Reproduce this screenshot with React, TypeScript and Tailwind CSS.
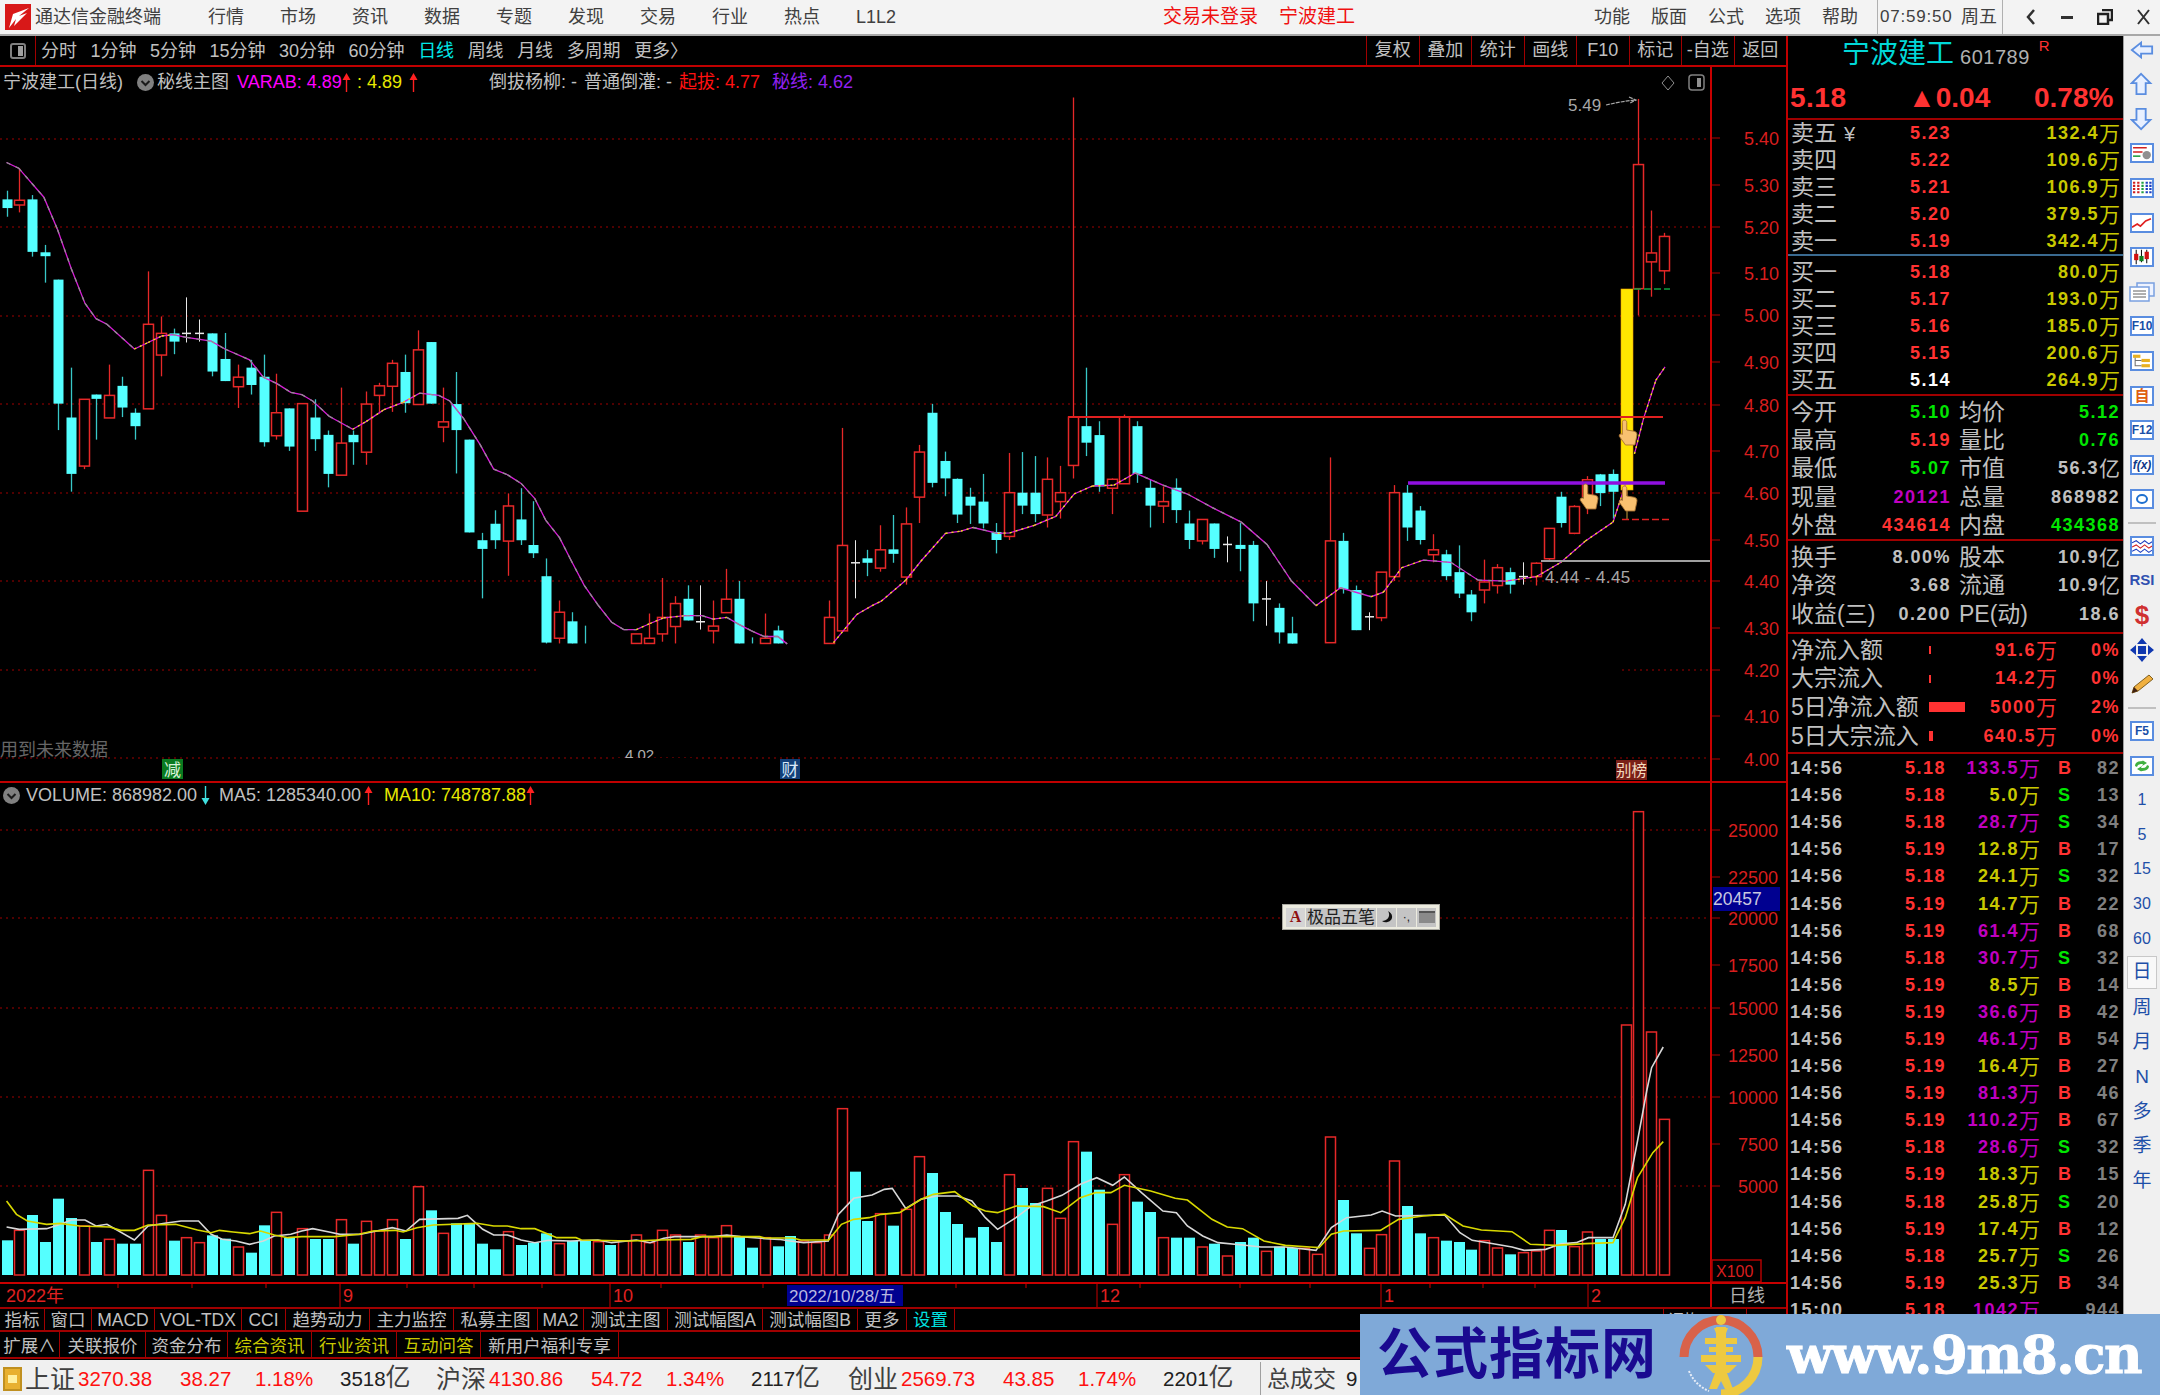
import type { ReactNode } from "react";

type Candle = ["c" | "r" | "w", number, number, number, number] | null;

// Candles read off the chart, index = trading day, values = high, body top, body bottom, low
const candlesLeft: Candle[] = [
  ["c", 140, 160, 180, 200], ["r", 88, 162, 173, 190], ["c", 150, 160, 281, 292], ["c", 265, 282, 291, 352],
  ["c", 345, 345, 631, 692], ["c", 548, 663, 793, 834], ["r", 621, 621, 775, 782], ["c", 610, 610, 620, 714],
  ["r", 541, 612, 664, 664], ["c", 569, 590, 640, 662], ["c", 642, 652, 683, 714], ["r", 326, 448, 643, 643],
  ["r", 430, 469, 519, 568], ["c", 458, 469, 488, 517], ["w", 386, 469, 471, 490], ["w", 437, 469, 471, 488],
  ["c", 469, 469, 557, 568], ["c", 468, 528, 579, 579], ["r", 541, 570, 592, 641], ["c", 530, 548, 588, 610],
  ["c", 518, 569, 720, 730], ["r", 562, 652, 705, 714], ["c", 642, 642, 730, 740], ["r", 631, 631, 879, 879],
  ["c", 621, 663, 713, 740], ["c", 693, 703, 793, 824], ["r", 594, 722, 796, 796], ["c", 693, 703, 720, 772],
  ["r", 603, 632, 743, 772], ["r", 583, 590, 612, 654], ["r", 530, 538, 591, 650], ["c", 518, 558, 630, 652],
  ["r", 462, 507, 633, 633], ["c", 489, 489, 631, 631], ["r", 594, 673, 685, 720], ["c", 558, 632, 692, 792],
  ["c", 714, 714, 928, 928], ["c", 929, 946, 966, 1080], ["c", 877, 908, 946, 966], ["r", 838, 867, 948, 1028],
  ["c", 826, 898, 946, 957], ["c", 856, 957, 976, 987], ["c", 988, 1029, 1182, 1184], ["r", 1085, 1112, 1172, 1184],
  ["c", 1112, 1133, 1184, 1184], ["c", 1143, 1184, 1184, 1184], null, null, null,
  ["r", 1162, 1162, 1184, 1184], ["r", 1115, 1172, 1184, 1184], ["r", 1033, 1124, 1162, 1180], ["r", 1075, 1092, 1145, 1184],
  ["c", 1050, 1081, 1131, 1131], ["w", 1050, 1134, 1136, 1152], ["r", 1085, 1144, 1155, 1184], ["r", 1012, 1082, 1113, 1113],
  ["c", 1040, 1081, 1184, 1184], ["c", 1170, 1184, 1184, 1184], ["r", 1115, 1172, 1184, 1184], ["c", 1143, 1154, 1184, 1184],
  null, null, null, ["r", 1085, 1124, 1184, 1184], ["r", 687, 958, 1155, 1155], ["w", 946, 998, 1000, 1080],
];

const candlesRight: Candle[] = [
  ["c", 1030, 1049, 1059, 1089], ["r", 975, 1030, 1071, 1079], ["c", 952, 1029, 1039, 1059], ["r", 935, 972, 1091, 1108],
  ["r", 795, 811, 912, 970], ["c", 703, 723, 880, 890], ["c", 810, 831, 870, 910], ["c", 870, 871, 951, 970],
  ["c", 891, 911, 931, 972], ["c", 860, 922, 971, 982], ["c", 970, 990, 1008, 1038], ["r", 813, 902, 1000, 1008],
  ["c", 811, 902, 931, 950], ["c", 820, 902, 950, 968], ["r", 823, 872, 952, 980], ["r", 842, 902, 922, 960],
  ["r", 17, 733, 841, 870], ["c", 622, 753, 790, 820], ["c", 742, 773, 888, 900], ["r", 870, 872, 892, 950],
  ["r", 727, 733, 882, 882], ["c", 742, 753, 860, 880], ["c", 872, 891, 931, 980], ["r", 888, 922, 932, 970],
  ["c", 870, 891, 941, 970], ["c", 942, 971, 1008, 1028], ["r", 962, 962, 1010, 1018], ["c", 971, 971, 1028, 1048],
  ["w", 1000, 1018, 1020, 1058], ["c", 970, 1019, 1028, 1078], ["c", 1010, 1019, 1150, 1190], ["w", 1100, 1140, 1142, 1200],
  ["c", 1150, 1160, 1215, 1240], ["c", 1180, 1217, 1240, 1240], null, null,
  ["r", 823, 1010, 1238, 1238], ["c", 992, 1010, 1118, 1128], ["c", 1110, 1120, 1210, 1210], ["w", 1170, 1180, 1182, 1210],
  ["r", 1080, 1080, 1182, 1190], ["r", 885, 902, 1090, 1100], ["c", 885, 902, 980, 1010], ["c", 932, 942, 1008, 1018],
  ["r", 995, 1030, 1041, 1058], ["c", 1030, 1040, 1089, 1098], ["c", 1020, 1080, 1128, 1138], ["c", 1120, 1130, 1170, 1190],
  ["r", 1052, 1102, 1120, 1150], ["r", 1062, 1070, 1110, 1128], ["c", 1070, 1080, 1108, 1128], ["w", 1058, 1090, 1092, 1108],
  ["r", 1058, 1060, 1090, 1110], ["r", 982, 982, 1050, 1055], ["c", 900, 911, 970, 980], ["r", 930, 933, 993, 995],
  ["r", 865, 873, 910, 950], ["c", 860, 861, 903, 932], ["c", 850, 860, 900, 960], null,
  ["r", 20, 167, 445, 505], ["r", 270, 365, 385, 463], ["r", 320, 328, 405, 435],
];

const y7 = (p: number) => 130 + p / 2.306;
const y8 = (p: number) => 90 + p / 2.24;
const barX = (i: number) => Math.round(6.5 + 12.85 * i);

const allCandles = [
  ...candlesLeft.map((c, i) => ({ c, i, y: y7 })),
  ...candlesRight.map((c, i) => ({ c, i: i + 67, y: y8 })),
];

const maA: number[][] = [[12, 75], [34, 88], [80, 155], [105, 230], [130, 320], [155, 400], [175, 435], [195, 448], [245, 505], [270, 490], [295, 475], [315, 472], [340, 478], [385, 487], [410, 505], [455, 530], [480, 570], [505, 585], [530, 605], [550, 610], [570, 625], [600, 660], [643, 690], [668, 672], [700, 645], [735, 628], [765, 607], [800, 612], [820, 625], [845, 665], [875, 725], [900, 782], [925, 795], [950, 815], [975, 850], [995, 900], [1020, 940], [1040, 990], [1065, 1050], [1090, 1095], [1115, 1135], [1137, 1152], [1160, 1152], [1185, 1138], [1210, 1125], [1250, 1120], [1280, 1120], [1300, 1128], [1325, 1124], [1347, 1140], [1370, 1155], [1393, 1168], [1418, 1168], [1435, 1185]];
const maB: number[][] = [[22, 1238], [60, 1175], [85, 1155], [100, 1145], [140, 1098], [165, 1055], [205, 993], [230, 988], [250, 980], [290, 993], [310, 992], [350, 975], [385, 955], [415, 905], [445, 887], [480, 885], [515, 858], [560, 885], [600, 905], [640, 935], [688, 968], [730, 1018], [770, 1100], [810, 1155], [850, 1115], [900, 1135], [920, 1125], [950, 1070], [985, 1053], [1030, 1058], [1075, 1098], [1120, 1100], [1170, 1090], [1210, 1058], [1250, 1010], [1295, 968], [1315, 885]];
const maC: number[][] = [[1330, 815], [1345, 735], [1365, 650], [1380, 620]];

const x7 = (p: number) => p / 1.823;
const x8 = (p: number) => 820 + p / 1.633;
const maLines = [
  maA.map(([a, b]) => [x7(a), y7(b)]),
  maB.map(([a, b]) => [x8(a), y8(b)]),
  maC.map(([a, b]) => [x8(a), y8(b)]),
];

const priceTicks = [
  ["5.40", 138], ["5.30", 185], ["5.20", 227], ["5.10", 273], ["5.00", 315], ["4.90", 362], ["4.80", 405], ["4.70", 451],
  ["4.60", 493], ["4.50", 540], ["4.40", 581], ["4.30", 628], ["4.20", 670], ["4.10", 716], ["4.00", 759],
] as const;

// volume bars: c = cyan solid, r = red outline, value = bar top
const volA: ["c" | "r", number][] = [
  ["c", 448], ["r", 418], ["c", 372], ["c", 453], ["c", 323], ["c", 381], ["r", 405], ["c", 453], ["r", 445], ["c", 458], ["c", 458],
  ["r", 238], ["r", 373], ["c", 449], ["r", 440], ["r", 455], ["c", 433], ["c", 443], ["r", 468], ["c", 485], ["c", 403], ["r", 364],
  ["c", 440], ["r", 413], ["c", 444], ["c", 444], ["r", 386], ["c", 458], ["r", 391], ["r", 420], ["r", 386], ["c", 444], ["r", 287],
  ["c", 358], ["r", 427], ["c", 397], ["c", 397], ["c", 458], ["c", 475], ["r", 422], ["c", 462], ["c", 455], ["c", 427], ["r", 458],
  ["c", 450], ["c", 450], ["r", 452], ["c", 462], ["r", 450], ["r", 432], ["r", 455], ["r", 418], ["r", 432], ["c", 453], ["r", 432],
  ["r", 440], ["r", 404], ["c", 437], ["c", 470], ["r", 440], ["c", 466], ["c", 435], ["r", 450], ["r", 455], ["r", 432], ["r", 53],
  ["c", 242], ["c", 390], ["r", 368], ["c", 404], ["r", 355], ["r", 197], ["c", 246], ["c", 363], ["c", 399], ["c", 440], ["c", 408],
  ["c", 453], ["r", 251], ["c", 291], ["c", 336], ["r", 292], ["r", 382], ["r", 152], ["c", 182], ["c", 296], ["r", 400], ["r", 251],
  ["c", 332], ["c", 363], ["r", 440], ["c", 440], ["c", 440], ["r", 468], ["c", 458], ["r", 495], ["c", 453], ["c", 440], ["r", 481],
  ["c", 467], ["c", 471], ["r", 472], ["r", 490], ["r", 138], ["c", 327], ["c", 427], ["r", 472], ["r", 431], ["r", 210], ["c", 345],
  ["c", 427], ["r", 440], ["c", 449], ["c", 453], ["c", 476], ["r", 449], ["r", 471], ["c", 490], ["r", 485], ["r", 480], ["r", 418],
  ["c", 417], ["r", 467], ["r", 423], ["c", 444], ["c", 444], ["r", -198], ["r", -838], ["r", -177], ["r", 85],
];

const ma5A = [[12, 408], [35, 415], [85, 413], [110, 400], [130, 387], [155, 387], [175, 405], [195, 400], [245, 447], [270, 405], [300, 397], [330, 390], [362, 390], [385, 430], [405, 445], [430, 450], [455, 460], [480, 450], [500, 435], [530, 430], [550, 420], [570, 413], [600, 423], [620, 430], [655, 430], [680, 422], [715, 410], [740, 420], [765, 385], [835, 382], [852, 373], [880, 415], [900, 432], [925, 432], [950, 447], [975, 455], [1000, 448], [1040, 450], [1090, 447], [1115, 455], [1160, 447], [1185, 455], [1210, 442], [1230, 437], [1265, 437], [1300, 437], [1325, 432], [1350, 437], [1395, 443], [1420, 445], [1440, 450], [1465, 455], [1510, 450]];
const ma5B = [[15, 435], [30, 370], [55, 322], [85, 312], [105, 295], [118, 292], [140, 352], [165, 325], [190, 315], [225, 315], [248, 330], [270, 380], [290, 415], [320, 380], [345, 345], [370, 330], [395, 313], [425, 280], [452, 260], [478, 283], [497, 258], [525, 305], [560, 360], [582, 365], [600, 405], [625, 435], [650, 455], [690, 462], [720, 468], [760, 468], [810, 478], [835, 410], [860, 380], [900, 372], [918, 360], [940, 375], [1020, 372], [1045, 425], [1065, 448], [1090, 455], [1130, 468], [1150, 478], [1185, 475], [1210, 458], [1235, 455], [1255, 440], [1295, 440], [1315, 340], [1335, 150], [1350, 0], [1358, -70], [1377, -132]];
const ma10A = [[12, 330], [30, 370], [50, 390], [85, 400], [110, 397], [145, 405], [200, 408], [220, 418], [245, 418], [270, 402], [320, 400], [360, 417], [385, 425], [400, 418], [425, 423], [455, 428], [475, 420], [500, 432], [525, 440], [550, 437], [610, 437], [655, 430], [680, 420], [720, 418], [735, 423], [760, 410], [790, 402], [870, 397], [900, 405], [925, 405], [950, 413], [975, 413], [1015, 440], [1050, 440], [1060, 447], [1150, 450], [1200, 447], [1260, 445], [1280, 437], [1385, 437], [1395, 441], [1445, 441], [1460, 447], [1510, 447]];
const ma10B = [[15, 445], [35, 400], [55, 385], [80, 380], [100, 370], [130, 365], [165, 325], [185, 310], [220, 302], [250, 345], [270, 360], [290, 365], [320, 345], [365, 347], [393, 365], [425, 320], [450, 305], [475, 305], [497, 283], [540, 300], [580, 322], [600, 327], [640, 385], [665, 408], [690, 413], [725, 450], [760, 463], [800, 468], [815, 470], [835, 430], [855, 420], [915, 418], [945, 385], [985, 375], [1020, 370], [1050, 405], [1080, 417], [1130, 422], [1160, 460], [1200, 463], [1250, 458], [1295, 455], [1315, 380], [1335, 260], [1360, 185], [1377, 152]];

const volPoints = (a: number[][], b: number[][]) =>
  [...a.map(([p, q]) => `${x7(p)},${1090 + q / 3}`), ...b.map(([p, q]) => `${x8(p)},${1090 + q / 3}`)].join(" ");

const volTicks = [
  ["25000", 829], ["22500", 876], ["20000", 917], ["17500", 964], ["15000", 1007], ["12500", 1054], ["10000", 1096], ["7500", 1143], ["5000", 1185],
] as const;

const Hand = ({ x, y }: { x: number; y: number }) => (
  <path
    transform={`translate(${x} ${y}) scale(1.25)`}
    d="M5 0C6.5 0 7 1 7 2V8L13 9C15 9.5 15.5 11 15 13L13.5 20H6L1 13C.5 11.5 2.5 10.5 3.5 11.5V2C3.5 1 4 0 5 0Z"
    fill="#f8c070"
    stroke="#a87030"
    strokeWidth="0.7"
  />
);

const PriceChart = () => (
  <svg className="block" width="1786" height="714" viewBox="0 67 1786 714">
    {[139, 227, 316, 404, 493, 581].map((y) => (
      <line key={y} x1="0" x2="1708" y1={y} y2={y} stroke="#a00000" strokeDasharray="2 4" />
    ))}
    <line x1="0" x2="537" y1="670" y2="670" stroke="#a00000" strokeDasharray="2 4" />
    <line x1="1622" x2="1708" y1="670" y2="670" stroke="#a00000" strokeDasharray="2 4" />
    <line x1="0" x2="1708" y1="758" y2="758" stroke="#a00000" strokeDasharray="2 4" />

    {allCandles.map(({ c, i, y }) => {
      if (!c) return null;
      const [kind, high, top, bot, low] = c;
      const x = barX(i);
      const color = kind === "c" ? "#55ffff" : kind === "r" ? "#e62828" : "#e8e8e8";
      if (kind === "w") {
        return (
          <g key={i} stroke={color}>
            <line x1={x + 0.5} x2={x + 0.5} y1={y(high)} y2={y(low)} />
            <line x1={x - 4} x2={x + 5} y1={y(top)} y2={y(top)} strokeWidth="1.5" />
          </g>
        );
      }
      return (
        <g key={i}>
          <line x1={x + 0.5} x2={x + 0.5} y1={y(high)} y2={y(low)} stroke={kind === "c" ? "#38c8c8" : color} strokeWidth="1.3" />
          {bot > top && (
            <rect
              x={x - 4.5}
              y={y(top)}
              width={10}
              height={y(bot) - y(top)}
              fill={kind === "c" ? color : "#000"}
              stroke={kind === "r" ? color : "none"}
              strokeWidth="1.5"
            />
          )}
        </g>
      );
    })}

    {/* 涨停大阳 bar */}
    <line x1="1627" x2="1627" y1="489" y2="519" stroke="#c8a040" />
    <rect x="1621" y="289" width="12" height="201" fill="#ffe600" stroke="#f0a000" strokeWidth="0.6" />

    {maLines.map((pts, k) => (
      <g key={k} fill="none">
        <polyline points={pts.map((p) => p.join(",")).join(" ")} stroke="#d81ed8" strokeWidth="1.3" />
        {pts.slice(1).map((p, n) => {
          const prev = pts[n];
          const rising = p[1] < prev[1];
          return (
            <line
              key={n}
              x1={prev[0]}
              y1={prev[1]}
              x2={p[0]}
              y2={p[1]}
              stroke={rising ? "#f0f000" : "#909090"}
              strokeWidth="1.3"
              strokeDasharray={rising ? "2 4" : "4 6"}
            />
          );
        })}
      </g>
    ))}

    <line x1="1068" x2="1663" y1="417" y2="417" stroke="#e02020" strokeWidth="2" />
    <line x1="1408" x2="1665" y1="483" y2="483" stroke="#9010e0" strokeWidth="3.5" />
    <line x1="1541" x2="1711" y1="561" y2="561" stroke="#a0a0a0" strokeWidth="2" />
    <line x1="1634" x2="1670" y1="289" y2="289" stroke="#10a040" strokeWidth="1.5" strokeDasharray="7 3" />
    <line x1="1622" x2="1670" y1="519.5" y2="519.5" stroke="#e02020" strokeWidth="1.5" strokeDasharray="7 3" />
    <Hand x={1579} y={484} />
    <Hand x={1618} y={420} />
    <Hand x={1618} y={486} />

    <text x="1545" y="583" fill="#a8a8a8" fontSize="17" letterSpacing="0.4">4.44 - 4.45</text>
    <text x="1568" y="111" fill="#a8a8a8" fontSize="17">5.49</text>
    <path d="M1606 105C1615 103 1625 101 1635 100M1629 97L1636 100L1630 103" fill="none" stroke="#a8a8a8" strokeWidth="1.2" strokeDasharray="4 1" />
    <path d="M1668 76L1674 83L1668 90L1662 83Z" fill="none" stroke="#909090" />
    <rect x="1689" y="75" width="15" height="15" rx="3" fill="none" stroke="#808080" strokeWidth="1.5" />
    <rect x="1697" y="78" width="4" height="9" fill="#909090" />

    <text x="0" y="756" fill="#666" fontSize="18">用到未来数据</text>
    <text x="625" y="760" fill="#b0b0b0" fontSize="15">4.02</text>
    <rect x="615" y="758" width="80" height="10" fill="#000" />

    <rect x="162" y="759" width="21" height="20" fill="#0a7a20" />
    <text x="172.5" y="776" textAnchor="middle" fill="#d8f0d8" fontSize="17">减</text>
    <rect x="780" y="759" width="20" height="20" fill="#123f78" />
    <text x="790" y="776" textAnchor="middle" fill="#d8e8f8" fontSize="17">财</text>
    <rect x="1616" y="760" width="31" height="20" fill="#7a2018" />
    <text x="1631.5" y="776" textAnchor="middle" fill="#f4dcc0" fontSize="15.5">别榜</text>

    <line x1="1711" x2="1711" y1="67" y2="781" stroke="#c80000" strokeWidth="2" />
    {priceTicks.map(([label, y]) => (
      <g key={label}>
        <line x1="1712" x2="1720" y1={y} y2={y} stroke="#b00000" />
        <text x="1744" y={y + 7} fill="#d81e1e" fontSize="18">{label}</text>
      </g>
    ))}
  </svg>
);

const VolumeChart = () => (
  <svg className="block" width="1786" height="524" viewBox="0 782 1786 524">
    {[829, 917, 1007, 1096, 1185].map((y) => (
      <line key={y} x1="0" x2="1708" y1={y} y2={y} stroke="#a00000" strokeDasharray="2 4" />
    ))}
    {volA.map(([kind, t], i) => {
      const x = barX(i);
      const top = 1090 + t / 3;
      return kind === "c" ? (
        <rect key={i} x={x - 5} y={top} width={11} height={1274 - top} fill="#55ffff" />
      ) : (
        <rect key={i} x={x - 4.5} y={top} width={10} height={1274 - top} fill="#000" stroke="#e62828" strokeWidth="1.5" />
      );
    })}
    <polyline points={volPoints(ma5A, ma5B)} fill="none" stroke="#d8d8d8" strokeWidth="1.6" />
    <polyline points={volPoints(ma10A, ma10B)} fill="none" stroke="#d8d800" strokeWidth="1.6" />

    <line x1="1711" x2="1711" y1="782" y2="1306" stroke="#c80000" strokeWidth="2" />
    {volTicks.map(([label, y]) => (
      <g key={label}>
        <line x1="1712" x2="1720" y1={y} y2={y} stroke="#b00000" />
        <text x="1778" y={y + 7} textAnchor="end" fill="#d81e1e" fontSize="18">{label}</text>
      </g>
    ))}
    <rect x="1713" y="886" width="67" height="24" fill="#000090" />
    <text x="1713" y="904" fill="#c8c8e0" fontSize="17.5">20457</text>
    <rect x="1712" y="1259" width="49" height="22" fill="#000" stroke="#b00000" strokeWidth="1.5" />
    <text x="1716" y="1276" fill="#d81e1e" fontSize="16">X100</text>

    <line x1="0" x2="1786" y1="1282" y2="1282" stroke="#c80000" strokeWidth="2" />
    <text x="6" y="1301" fill="#e02020" fontSize="18">2022年</text>
    {[[340, "9"], [610, "10"], [1097, "12"], [1381, "1"], [1588, "2"]].map(([x, label]) => (
      <g key={label}>
        <line x1={x} x2={x} y1="1282" y2="1306" stroke="#c80000" />
        <text x={Number(x) + 3} y="1301" fill="#e02020" fontSize="18">{label}</text>
      </g>
    ))}
    {[118, 192, 266, 407, 474, 542, 661, 763, 956, 1026, 1140, 1240, 1310, 1430, 1483, 1535].map((x) => (
      <line key={x} x1={x} x2={x} y1="1283" y2="1287" stroke="#c80000" />
    ))}
    <rect x="787" y="1284" width="116" height="21" fill="#000090" />
    <text x="789" y="1301" fill="#b8b8e0" fontSize="17">2022/10/28/五</text>
    <text x="1729" y="1301" fill="#b0b0b0" fontSize="18">日线</text>
  </svg>
);

const toolbarTabs = ["分时", "1分钟", "5分钟", "15分钟", "30分钟", "60分钟", "日线", "周线", "月线", "多周期", "更多〉"];
const toolbarRight = ["复权", "叠加", "统计", "画线", "F10", "标记", "-自选", "返回"];

const tabsOne: [string, string, string][] = [
  ["指标", "w-[45px]", "text-[#c0c0c0]"], ["窗口", "w-[47px]", "text-[#c0c0c0]"], ["MACD", "w-[63px]", "text-[#c0c0c0]"],
  ["VOL-TDX", "w-[87px]", "text-[#c0c0c0]"], ["CCI", "w-[44px]", "text-[#c0c0c0]"], ["趋势动力", "w-[84px]", "text-[#c0c0c0]"],
  ["主力监控", "w-[84px]", "text-[#c0c0c0]"], ["私募主图", "w-[84px]", "text-[#c0c0c0]"], ["MA2", "w-[46px]", "text-[#c0c0c0]"],
  ["测试主图", "w-[84px]", "text-[#c0c0c0]"], ["测试幅图A", "w-[95px]", "text-[#c0c0c0]"], ["测试幅图B", "w-[95px]", "text-[#c0c0c0]"],
  ["更多", "w-[49px]", "text-[#c0c0c0]"], ["设置", "w-[48px]", "text-[#00e0e0]"],
];
const tabsTwo: [string, string, string][] = [
  ["扩展∧", "w-[60px]", "text-[#c0c0c0]"], ["关联报价", "w-[86px]", "text-[#c0c0c0]"], ["资金分布", "w-[82px]", "text-[#c0c0c0]"],
  ["综合资讯", "w-[84px]", "text-[#c8c800]"], ["行业资讯", "w-[85px]", "text-[#c8c800]"], ["互动问答", "w-[84px]", "text-[#c8c800]"],
  ["新用户福利专享", "w-[138px]", "text-[#c0c0c0]"],
];

const sells = [["卖五", "5.23", "132.4"], ["卖四", "5.22", "109.6"], ["卖三", "5.21", "106.9"], ["卖二", "5.20", "379.5"], ["卖一", "5.19", "342.4"]];
const buys = [["买一", "5.18", "80.0"], ["买二", "5.17", "193.0"], ["买三", "5.16", "185.0"], ["买四", "5.15", "200.6"], ["买五", "5.14", "264.9"]];

const quote = [
  ["今开", "5.10", "text-[#00e600]", "均价", "5.12", "text-[#00e600]"],
  ["最高", "5.19", "text-[#ff3232]", "量比", "0.76", "text-[#00e600]"],
  ["最低", "5.07", "text-[#00e600]", "市值", "56.3亿", "text-[#c0c0c0]"],
  ["现量", "20121", "text-[#c000c0]", "总量", "868982", "text-[#c0c0c0]"],
  ["外盘", "434614", "text-[#ff3232]", "内盘", "434368", "text-[#00e600]"],
];
const finance = [
  ["换手", "8.00%", "股本", "10.9亿"],
  ["净资", "3.68", "流通", "10.9亿"],
  ["收益(三)", "0.200", "PE(动)", "18.6"],
];
const flows = [
  ["净流入额", "w-[2px] h-[8px]", "91.6万", "0%"],
  ["大宗流入", "w-[2px] h-[8px]", "14.2万", "0%"],
  ["5日净流入额", "w-[36px] h-[10px]", "5000万", "2%"],
  ["5日大宗流入", "w-[4px] h-[10px]", "640.5万", "0%"],
];

const ticks: [string, string, string, string, string][] = [
  ["14:56", "5.18", "133.5", "B", "82"], ["14:56", "5.18", "5.0", "S", "13"], ["14:56", "5.18", "28.7", "S", "34"],
  ["14:56", "5.19", "12.8", "B", "17"], ["14:56", "5.18", "24.1", "S", "32"], ["14:56", "5.19", "14.7", "B", "22"],
  ["14:56", "5.19", "61.4", "B", "68"], ["14:56", "5.18", "30.7", "S", "32"], ["14:56", "5.19", "8.5", "B", "14"],
  ["14:56", "5.19", "36.6", "B", "42"], ["14:56", "5.19", "46.1", "B", "54"], ["14:56", "5.19", "16.4", "B", "27"],
  ["14:56", "5.19", "81.3", "B", "46"], ["14:56", "5.19", "110.2", "B", "67"], ["14:56", "5.18", "28.6", "S", "32"],
  ["14:56", "5.19", "18.3", "B", "15"], ["14:56", "5.18", "25.8", "S", "20"], ["14:56", "5.19", "17.4", "B", "12"],
  ["14:56", "5.18", "25.7", "S", "26"], ["14:56", "5.19", "25.3", "B", "34"], ["15:00", "5.18", "1042", "", "944"],
];

const num = "font-bold tracking-[1.5px] text-[18px]";

const Wan = ({ v, unit }: { v: string; unit?: string }) => (
  <span className="inline-flex items-center">
    <span className={num}>{v}</span>
    {unit && <span className="text-[21px] leading-none font-normal">{unit}</span>}
  </span>
);

const splitUnit = (s: string) => {
  const m = s.match(/^(.*?)([万亿])$/);
  return m ? <Wan v={m[1]} unit={m[2]} /> : <Wan v={s} />;
};

const StockPanel = () => (
  <div className="w-[337px] h-full border-l-2 border-[#c00000] bg-black flex flex-col overflow-hidden">
    <div className="h-[42px] flex items-start pl-[54px] shrink-0">
      <span className="text-[28px] leading-[36px] text-[#00d8d8]">宁波建工</span>
      <span className="text-[20px] leading-[36px] mt-[3px] ml-[6px] text-[#b0b0b0] tracking-[0.5px]">601789</span>
      <span className="text-[15px] leading-[14px] ml-[9px] mt-[3px] text-[#ff3232]">R</span>
    </div>
    <div className="h-[42px] flex items-center text-[#ff3232] font-bold text-[28px] border-b-2 border-[#a00000] shrink-0">
      <span className="ml-[2px] w-[118px] tracking-[0.5px]">5.18</span>
      <span className="w-[126px]">▲0.04</span>
      <span>0.78%</span>
    </div>
    {[sells, buys].map((list, k) => (
      <div key={k} className={k === 0 ? "h-[136px] border-b-2 border-[#3a6a90] shrink-0" : "h-[140px] pt-[3px] border-b-2 border-[#a00000] shrink-0"}>
        {list.map(([label, price, vol]) => (
          <div key={label} className="h-[27px] flex items-center pl-[3px] pr-[3px]">
            <div className="w-[160px] flex justify-between items-center">
              <span className="text-[23px] leading-none text-[#c0c0c0] whitespace-nowrap">
                {label}
                {label === "卖五" && <span className="text-[20px] ml-[7px]">¥</span>}
              </span>
              <span className={`${num} ${price === "5.14" ? "text-white" : "text-[#ff3232]"}`}>{price}</span>
            </div>
            <div className="flex-1 text-right text-[#c8c800]">
              <Wan v={vol} unit="万" />
            </div>
          </div>
        ))}
      </div>
    ))}
    <div className="h-[145px] pt-[2px] border-b-2 border-[#a00000] shrink-0">
      {quote.map(([a, b, bc, c, d, dc]) => (
        <div key={a} className="h-[28.3px] flex items-center pl-[3px] pr-[3px]">
          <div className="w-[160px] flex justify-between items-center">
            <span className="text-[23px] leading-none text-[#c0c0c0]">{a}</span>
            <span className={`${num} ${bc}`}>{b}</span>
          </div>
          <div className="flex-1 pl-[8px] flex justify-between items-center">
            <span className="text-[23px] leading-none text-[#c0c0c0]">{c}</span>
            <span className={dc}>{splitUnit(d)}</span>
          </div>
        </div>
      ))}
    </div>
    <div className="h-[93px] pt-[2px] border-b-2 border-[#a00000] text-[#c0c0c0] shrink-0">
      {finance.map(([a, b, c, d]) => (
        <div key={a} className="h-[28.5px] flex items-center pl-[3px] pr-[3px]">
          <div className="w-[160px] flex justify-between items-center">
            <span className="text-[23px] leading-none">{a}</span>
            <span className={num}>{b}</span>
          </div>
          <div className="flex-1 pl-[8px] flex justify-between items-center">
            <span className="text-[23px] leading-none">{c}</span>
            {splitUnit(d)}
          </div>
        </div>
      ))}
    </div>
    <div className="h-[120px] pt-[2px] border-b-2 border-[#a00000] shrink-0">
      {flows.map(([label, bar, val, pct]) => (
        <div key={label} className="h-[28.6px] flex items-center pl-[3px] pr-[3px]">
          <span className="w-[138px] text-[23px] leading-none text-[#c0c0c0] whitespace-nowrap">{label}</span>
          <span className="w-[54px]">
            <span className={`block bg-[#ff3232] ${bar}`} />
          </span>
          <span className="w-[74px] text-right text-[#ff3232]">{splitUnit(val)}</span>
          <span className={`flex-1 text-right text-[#ff3232] ${num}`}>{pct}</span>
        </div>
      ))}
    </div>
    <div className="flex-1 overflow-hidden pt-[1px]">
      {ticks.map(([t, price, vol, side, count], i) => (
        <div key={i} className="h-[27.1px] flex items-center pl-[2px] pr-[3px] shrink-0">
          <span className={`w-[60px] text-[#c0c0c0] ${num}`}>{t}</span>
          <span className={`w-[96px] text-right text-[#ff3232] ${num}`}>{price}</span>
          <span className={`w-[94px] text-right ${Number(vol) >= 28 ? "text-[#c000c0]" : "text-[#c8c800]"}`}>
            <Wan v={vol} unit="万" />
          </span>
          <span className={`ml-[18px] w-[14px] ${side === "B" ? "text-[#ff3232]" : "text-[#00e600]"} ${num}`}>{side}</span>
          <span className={`flex-1 text-right text-[#808080] ${num}`}>{count}</span>
        </div>
      ))}
    </div>
  </div>
);

const IconBox = ({ children }: { children: ReactNode }) => (
  <span className="w-[24px] h-[20px] border-2 border-[#5a8de0] bg-white flex items-center justify-center overflow-hidden text-[12px] leading-none text-[#1a4fa8] font-bold">
    {children}
  </span>
);

const SideRow = ({ children }: { children: ReactNode }) => (
  <div className="h-[34.6px] flex items-center justify-center shrink-0">{children}</div>
);

const SideSep = () => <div className="h-[2px] mx-[4px] bg-[#c0c0c0] shrink-0 my-[5px]" />;

const SideBar = () => (
  <div className="w-[37px] h-full bg-[#f0f0f0] flex flex-col border-l border-[#a0a0a0]">
    <div className="h-[28px] flex items-center justify-center shrink-0 mb-[3px]">
      <svg width="24" height="26" viewBox="0 0 26 26">
        <path d="M2 13L12 5V9H24V17H12V21Z" fill="#e8f0ff" stroke="#5a8de0" strokeWidth="2" />
      </svg>
    </div>
    {["M12 2L22 12H17V24H7V12H2Z", "M12 24L2 14H7V2H17V14H22Z"].map((d) => (
      <SideRow key={d}>
        <svg width="24" height="26" viewBox="0 0 26 26">
          <path d={d} fill="#e8f0ff" stroke="#5a8de0" strokeWidth="2" />
        </svg>
      </SideRow>
    ))}
    <SideRow>
      <IconBox>
        <svg width="20" height="16" viewBox="0 0 19 14">
          <path d="M1 2H14M1 6H10" stroke="#d02020" strokeWidth="1.5" />
          <path d="M1 10H8" stroke="#20a040" strokeWidth="1.5" />
          <circle cx="14" cy="9" r="4" fill="#909090" />
        </svg>
      </IconBox>
    </SideRow>
    <SideRow>
      <IconBox>
        <svg width="20" height="16" viewBox="0 0 19 14">
          <path d="M2 1V13M6 1V13" stroke="#d02020" strokeWidth="2.2" strokeDasharray="2 1" />
          <path d="M10 1V13" stroke="#20a040" strokeWidth="2.2" strokeDasharray="2 1" />
          <path d="M14 1V13M17.5 1V13" stroke="#2040c0" strokeWidth="2.2" strokeDasharray="2 1" />
        </svg>
      </IconBox>
    </SideRow>
    <SideRow>
      <IconBox>
        <svg width="20" height="16" viewBox="0 0 19 14">
          <path d="M0 11L5 8L8 10L13 5L18 3" fill="none" stroke="#e02020" strokeWidth="1.6" />
        </svg>
      </IconBox>
    </SideRow>
    <SideRow>
      <IconBox>
        <svg width="20" height="16" viewBox="0 0 19 14">
          <path d="M4 0V14M9 0V12M14 0V13" stroke="#111" />
          <rect x="2" y="4" width="4" height="6" fill="#d01010" />
          <rect x="7" y="6" width="4" height="5" fill="#108020" />
          <rect x="12" y="2" width="4" height="7" fill="#d01010" />
        </svg>
      </IconBox>
    </SideRow>
    <SideRow>
      <svg width="26" height="20" viewBox="0 0 26 20">
        <rect x="8" y="1" width="17" height="13" fill="#eef3ff" stroke="#7aa0e0" strokeWidth="1.5" />
        <rect x="1" y="5" width="19" height="14" fill="#fff" stroke="#7aa0e0" strokeWidth="1.5" />
        <path d="M4 9H17M4 12H17M4 15H17" stroke="#606060" />
      </svg>
    </SideRow>
    <SideRow><IconBox>F10</IconBox></SideRow>
    <SideRow>
      <IconBox>
        <svg width="20" height="16" viewBox="0 0 19 14">
          <rect x="1" y="1" width="7" height="3" fill="#e8b020" />
          <rect x="9" y="5" width="8" height="3" fill="#e8b020" />
          <rect x="9" y="10" width="8" height="3" fill="#e8b020" />
          <path d="M3 4V11.5H9M3 6.5H9" fill="none" stroke="#707070" />
        </svg>
      </IconBox>
    </SideRow>
    <SideRow>
      <IconBox><span className="text-[#e06010] text-[15px]">自</span></IconBox>
    </SideRow>
    <SideRow><IconBox>F12</IconBox></SideRow>
    <SideRow>
      <IconBox><span className="text-[#103a8a] italic text-[12px]">f(x)</span></IconBox>
    </SideRow>
    <SideRow>
      <IconBox>
        <svg width="14" height="12" viewBox="0 0 14 12">
          <ellipse cx="7" cy="6" rx="5" ry="4" fill="none" stroke="#1e70d0" strokeWidth="2" />
        </svg>
      </IconBox>
    </SideRow>
    <SideSep />
    <SideRow>
      <IconBox>
        <svg width="20" height="16" viewBox="0 0 19 14">
          <path d="M0 4L4 2L8 5L12 2L16 5L19 3" fill="none" stroke="#2040c0" />
          <path d="M0 8L4 6L8 9L12 6L16 9L19 7" fill="none" stroke="#d02020" />
          <path d="M0 12L4 10L8 13L12 10L16 13L19 11" fill="none" stroke="#2040c0" />
        </svg>
      </IconBox>
    </SideRow>
    <SideRow><span className="text-[15px] font-bold text-[#3050b0]">RSI</span></SideRow>
    <SideRow><span className="text-[26px] leading-none font-bold text-[#d03030]">$</span></SideRow>
    <SideRow>
      <svg width="26" height="26" viewBox="0 0 26 26" fill="#1038b0">
        <path d="M13 1L18 7H8ZM13 25L8 19H18ZM1 13L7 8V18ZM25 13L19 18V8Z" />
        <rect x="9" y="9" width="8" height="8" />
      </svg>
    </SideRow>
    <SideRow>
      <svg width="26" height="24" viewBox="0 0 26 24">
        <path d="M3 21L5 15L20 3L24 7L9 19Z" fill="#f0b040" stroke="#806020" />
        <path d="M3 21L5 15L9 19Z" fill="#402010" />
      </svg>
    </SideRow>
    <SideSep />
    <SideRow><IconBox>F5</IconBox></SideRow>
    <SideRow>
      <IconBox>
        <svg width="16" height="12" viewBox="0 0 16 12">
          <path d="M1 6C1 2 5 1 9 1L8 0L13 3L8 6L9 4C6 4 4 4 3 7ZM15 6C15 10 11 11 7 11L8 12L3 9L8 6L7 8C10 8 12 8 13 5Z" fill="#40b040" />
        </svg>
      </IconBox>
    </SideRow>
    {["1", "5", "15", "30", "60"].map((t) => (
      <SideRow key={t}><span className="text-[16px] text-[#1e4fa8]">{t}</span></SideRow>
    ))}
    <div className="h-[33px] mx-[3px] mb-[2px] border border-[#c8c8c8] bg-[#f8f8f8] flex items-center justify-center shrink-0 text-[19px] text-[#1e4fa8]">日</div>
    {["周", "月", "N", "多", "季", "年"].map((t) => (
      <SideRow key={t}><span className="text-[19px] text-[#1e4fa8]">{t}</span></SideRow>
    ))}
  </div>
);

const Logo = () => (
  <svg className="ml-[24px] shrink-0" width="84" height="80" viewBox="0 0 84 80">
    <path d="M5 42A37 37 0 0 1 79 42" fill="none" stroke="#d8624a" strokeWidth="9" />
    <path d="M79 42A37 37 0 0 1 42 79" fill="none" stroke="#eec940" strokeWidth="9" />
    <circle cx="42" cy="5" r="5" fill="#eec940" />
    <path d="M35 13H49L46 21H38Z" fill="#eec940" />
    <rect x="26" y="23" width="32" height="6" fill="#eec940" />
    <rect x="30" y="32" width="24" height="5" fill="#eec940" />
    <rect x="22" y="40" width="40" height="7" fill="#eec940" />
    <rect x="37" y="12" width="10" height="54" fill="#eec940" />
    <path d="M26 50H58L50 58H34Z" fill="#eec940" />
    <path d="M36 58H48L54 74H46L42 66L38 74H30Z" fill="#eec940" />
    <path d="M10 56A36 36 0 0 0 30 76" fill="none" stroke="#e8eef8" strokeWidth="2" strokeDasharray="2 1.5" />
  </svg>
);

const Watermark = () => (
  <div className="absolute left-[1360px] right-0 bottom-0 h-[81px] bg-[#7fa9d8] flex items-center overflow-hidden">
    <span className="ml-[17px] w-[278px] text-[55px] leading-none font-bold text-[#1a0a90] tracking-[1px] whitespace-nowrap">公式指标网</span>
    <Logo />
    <span className="ml-[24px] text-[53px] leading-none font-bold text-white font-['DejaVu_Serif',serif] tracking-[-1.5px] whitespace-nowrap [-webkit-text-stroke:1px_white]">www.9m8.cn</span>
  </div>
);

const statusGroups = [
  ["上证", "3270.38", "38.27", "1.18%", "3518", "w-[96px]"],
  ["沪深", "4130.86", "54.72", "1.34%", "2117", "w-[97px]"],
  ["创业", "2569.73", "43.85", "1.74%", "2201", "w-[97px]"],
];

const UpArrow = () => (
  <svg className="shrink-0" width="9" height="19" viewBox="0 0 9 19">
    <path d="M4.5 6V19" stroke="#ff2020" strokeWidth="1.4" />
    <path d="M4.5 0L8.5 7H0.5Z" fill="#ff2020" />
  </svg>
);

const DownArrow = () => (
  <svg className="shrink-0" width="9" height="19" viewBox="0 0 9 19">
    <path d="M4.5 0V13" stroke="#40e0e0" strokeWidth="1.4" />
    <path d="M4.5 19L8.5 12H0.5Z" fill="#40e0e0" />
  </svg>
);

const ChevronDot = () => (
  <svg className="shrink-0" width="17" height="17" viewBox="0 0 17 17">
    <circle cx="8.5" cy="8.5" r="8.5" fill="#808080" />
    <path d="M4.5 7L8.5 11L12.5 7" fill="none" stroke="#1a1a1a" strokeWidth="2" />
  </svg>
);

export default function App() {
  return (
    <div className="relative w-[2160px] h-[1395px] overflow-hidden bg-black font-['Liberation_Sans','Noto_Sans_CJK_SC',sans-serif]">
      <header className="h-[36px] bg-[#f3f3f3] flex items-center text-[18px] text-[#404040] border-b-2 border-[#a8a8a8]">
        <svg className="ml-[5px] shrink-0" width="26" height="26" viewBox="0 0 26 26">
          <rect width="26" height="26" fill="#d81818" />
          <path d="M24 4L8 10L4 24L11 15L9 22L22 9L14 12Z" fill="#fff" />
        </svg>
        <span className="ml-[4px] w-[127px] whitespace-nowrap">通达信金融终端</span>
        <nav className="ml-[46px] flex gap-[36px]">
          {["行情", "市场", "资讯", "数据", "专题", "发现", "交易", "行业", "热点", "L1L2"].map((m) => (
            <span key={m} className="w-[36px] whitespace-nowrap">{m}</span>
          ))}
        </nav>
        <span className="ml-[271px] text-[19px] text-[#f01010] whitespace-nowrap">交易未登录</span>
        <span className="ml-[21px] text-[19px] text-[#f01010] whitespace-nowrap">宁波建工</span>
        <nav className="ml-[239px] flex gap-[21px]">
          {["功能", "版面", "公式", "选项", "帮助"].map((m) => (
            <span key={m} className="w-[36px]">{m}</span>
          ))}
        </nav>
        <span className="ml-[19px] h-full border-l border-[#b0b0b0] pl-[2px] flex items-center w-[84px] text-[17px] tracking-[0.8px] whitespace-nowrap">
          07:59:50
        </span>
        <span className="whitespace-nowrap">周五</span>
        <span className="ml-[5px] flex-1 h-full border-l border-[#b0b0b0] flex items-center justify-between pl-[22px] pr-[10px] text-[#303030]">
          <svg width="12" height="18" viewBox="0 0 12 18"><path d="M9 2L3 9L9 16" fill="none" stroke="#303030" strokeWidth="2.5" /></svg>
          <span className="w-[12px] h-[3px] bg-[#303030]" />
          <svg width="16" height="16" viewBox="0 0 16 16"><path d="M5 1H15V11H12M1 5H11V15H1Z" fill="none" stroke="#202020" strokeWidth="2.5" /></svg>
          <svg width="13" height="16" viewBox="0 0 13 16"><path d="M1 1L12 15M12 1L1 15" stroke="#303030" strokeWidth="2" /></svg>
        </span>
      </header>

      <div className="h-[1323px] flex">
        <div className="w-[1786px] flex flex-col shrink-0">
          <div className="h-[31px] border-b-2 border-[#c00000] flex items-center text-[18px] text-[#c0c0c0] shrink-0">
            <div className="w-[36px] h-full border-r border-[#a00000] flex items-center justify-center">
              <span className="w-[16px] h-[16px] rounded-[3px] border-2 border-[#808080] flex justify-end p-[1px]">
                <span className="w-[5px] bg-[#a0a0a0]" />
              </span>
            </div>
            <div className="ml-[5px] pt-[2px] flex gap-[13.5px] items-center">
              {toolbarTabs.map((t) => (
                <span key={t} className={t === "日线" ? "text-[#00e8e8]" : ""}>{t}</span>
              ))}
            </div>
            <div className="ml-auto h-full flex">
              {toolbarRight.map((t) => (
                <span key={t} className="w-[52.5px] h-full border-l border-[#a00000] flex items-center justify-center">{t}</span>
              ))}
            </div>
          </div>

          <div className="relative h-[714px] shrink-0">
            <PriceChart />
            <div className="absolute left-[3px] top-[3px] flex items-center text-[18px] h-[24px] text-[#c0c0c0] whitespace-nowrap">
              <span className="w-[134px]">宁波建工(日线)</span>
              <ChevronDot />
              <span className="w-[80px] ml-[3px]">秘线主图</span>
              <span className="text-[#ff00ff] w-[105px]">VARAB: 4.89</span>
              <span className="w-[15px]"><UpArrow /></span>
              <span className="text-[#e8e800] w-[52px]">: 4.89</span>
              <span className="w-[80px]"><UpArrow /></span>
              <span className="w-[95px]">倒拔杨柳: -</span>
              <span className="w-[95px]">普通倒灌: -</span>
              <span className="text-[#ff1010] w-[93px]">起拔: 4.77</span>
              <span className="text-[#9020f0]">秘线: 4.62</span>
            </div>
          </div>

          <div className="h-[2px] bg-[#c00000] shrink-0" />

          <div className="relative h-[524px] shrink-0">
            <VolumeChart />
            <div className="absolute left-[3px] top-0 h-[24px] flex items-center text-[18px] text-[#c0c0c0] whitespace-nowrap">
              <ChevronDot />
              <span className="w-[175px] ml-[6px]">VOLUME: 868982.00</span>
              <span className="w-[18px]"><DownArrow /></span>
              <span className="w-[145px]">MA5: 1285340.00</span>
              <span className="w-[20px]"><UpArrow /></span>
              <span className="text-[#e8e800] w-[142px]">MA10: 748787.88</span>
              <UpArrow />
            </div>
            {/* floating IME bar */}
            <div className="absolute left-[1282px] top-[121px] w-[158px] h-[26px] bg-[#ecebdf] border border-[#a8a8a0] flex items-center gap-[1px] pl-[3px] text-[#202020]">
              <span className="w-[19px] h-[19px] bg-[#d4d4d4] flex items-center justify-center text-[16px] font-bold text-[#901010] font-['Liberation_Serif',serif]">A</span>
              <span className="w-[70px] h-[19px] bg-[#c4c4c4] flex items-center justify-center text-[17px] leading-none">极品五笔</span>
              <span className="w-[19px] h-[19px] bg-[#c4c4c4] flex items-center justify-center">
                <svg width="12" height="12" viewBox="0 0 12 12"><path d="M7 0C9 3 9 9 1 10C5 13 12 10 11 5C11 3 9 1 7 0Z" fill="#111" /></svg>
              </span>
              <span className="w-[19px] h-[19px] bg-[#c4c4c4] flex items-center justify-center text-[12px] leading-none">·,</span>
              <span className="w-[19px] h-[19px] bg-[#c4c4c4] flex items-center justify-center">
                <span className="w-[16px] h-[12px] bg-[#8a8a8a] border-t-2 border-[#555]" />
              </span>
            </div>
          </div>

          <div className="h-[25px] flex border-y-2 border-[#a00000] shrink-0">
            {tabsOne.map(([t, w, c]) => (
              <span key={t} className={`${w} ${c} h-full pt-[1px] border-r border-[#a00000] flex items-center justify-center text-[17.5px] whitespace-nowrap`}>{t}</span>
            ))}
            <span className="ml-auto mr-[39px] w-[84px] border-x border-[#a00000] text-[16px] text-[#c0c0c0] pl-[4px]">调拖</span>
          </div>
          <div className="h-[27px] flex border-b-2 border-[#a00000] shrink-0">
            {tabsTwo.map(([t, w, c]) => (
              <span key={t} className={`${w} ${c} h-full pt-[3px] border-r border-[#a00000] flex items-center justify-center text-[17.5px] whitespace-nowrap`}>{t}</span>
            ))}
          </div>
        </div>
        <StockPanel />
        <SideBar />
      </div>

      <footer className="absolute left-0 right-0 bottom-0 h-[35px] pt-[3px] bg-[#f0f0f0] flex items-center text-[#ff1010]">
        <span className="ml-[3px] mr-[3px] w-[19px] h-[24px] bg-[#e8b030] border-2 border-[#c09020] flex items-center justify-center shrink-0">
          <span className="w-[9px] h-[8px] bg-[#fff0a0]" />
        </span>
        {statusGroups.map(([label, price, chg, pct, amt, w]) => (
          <span key={label} className="flex items-center whitespace-nowrap text-[20.5px]">
            <span className="w-[53px] text-[25px] leading-none text-[#404040]">{label}</span>
            <span className="w-[102px]">{price}</span>
            <span className="w-[75px]">{chg}</span>
            <span className="w-[85px]">{pct}</span>
            <span className={`${w} text-[#202020]`}>
              {amt}
              <span className="text-[25px] leading-none text-[#404040]">亿</span>
            </span>
          </span>
        ))}
        <span className="pl-[6px] border-l border-[#a0a0a0] text-[23px] text-[#404040] whitespace-nowrap">总成交</span>
        <span className="ml-[10px] text-[20.5px] text-[#202020] whitespace-nowrap">9</span>
      </footer>

      <Watermark />
    </div>
  );
}
